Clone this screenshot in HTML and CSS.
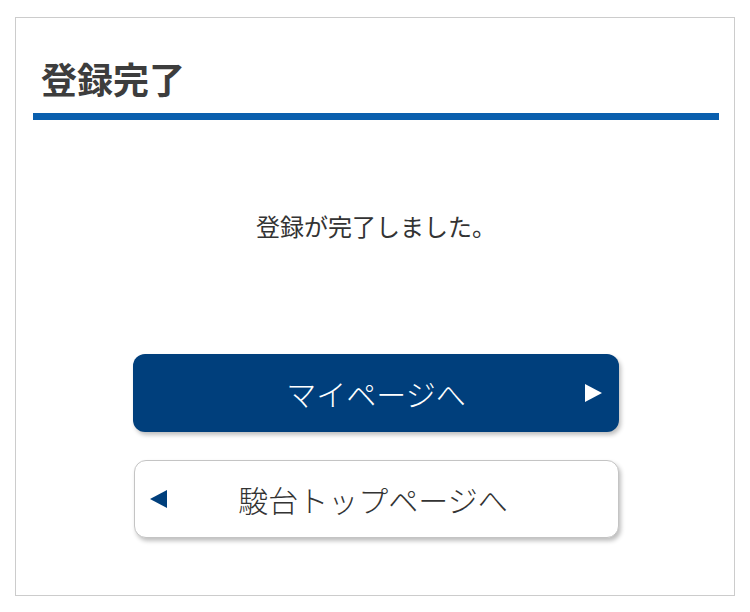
FILE: index.html
```html
<!DOCTYPE html>
<html lang="ja">
<head>
  <meta charset="UTF-8">
  <meta name="viewport" content="width=device-width, initial-scale=1.0">
  <title>登録完了</title>
  <link rel="stylesheet" href="styles.css">
</head>
<body>
  <div class="frame">
    <h1 class="page-title">登録完了</h1>

    <p class="message">登録が完了しました。</p>

    <div class="actions">
      <a href="#" class="btn btn-primary">
        <span class="btn-label">マイページへ</span>
        <span class="arrow arrow-right"></span>
      </a>
      <a href="#" class="btn btn-secondary">
        <span class="arrow arrow-left"></span>
        <span class="btn-label">駿台トップページへ</span>
      </a>
    </div>
  </div>
</body>
</html>
```

FILE: styles.css
```css
body {
  margin: 0;
  background: #fff;
  font-family: "Noto Sans CJK JP", "Noto Sans", sans-serif;
  color: #333;
}
.frame {
  margin: 17px 15px 0;
  border: 1px solid #ccc;
  padding: 0 15px 0 17px;
  box-sizing: border-box;
  height: 579px;
}
.page-title {
  margin: 0;
  padding: 39px 0 13px 8px;
  font-size: 36px;
  line-height: 1.2;
  font-weight: bold;
  color: #3d3d3d;
  border-bottom: 7px solid #0a5fae;
}
.message {
  margin: 89px 0 0;
  text-align: center;
  font-size: 24px;
  line-height: 1.4;
  color: #333;
}
.actions {
  display: flex;
  flex-direction: column;
  align-items: center;
  gap: 28px;
  margin-top: 111px;
}
.btn {
  position: relative;
  display: flex;
  align-items: center;
  justify-content: center;
  width: 486px;
  height: 78px;
  box-sizing: border-box;
  border-radius: 12px;
  text-decoration: none;
  font-size: 30px;
  font-weight: 300;
  box-shadow: 2px 3px 4px rgba(0,0,0,0.25);
}
.btn-primary {
  background: #003f7c;
  color: #fff;
}
.btn-secondary {
  width: 485px;
  padding-right: 6px;
  background: #fff;
  color: #333;
  border: 1.5px solid #c4c4c4;
}
.arrow {
  position: absolute;
  top: 50%;
  width: 0;
  height: 0;
  margin-top: -9px;
  border-top: 9px solid transparent;
  border-bottom: 9px solid transparent;
}
.arrow-right {
  right: 17px;
  border-left: 17px solid #fff;
}
.arrow-left {
  left: 15px;
  border-right: 17px solid #003f7c;
}
```
